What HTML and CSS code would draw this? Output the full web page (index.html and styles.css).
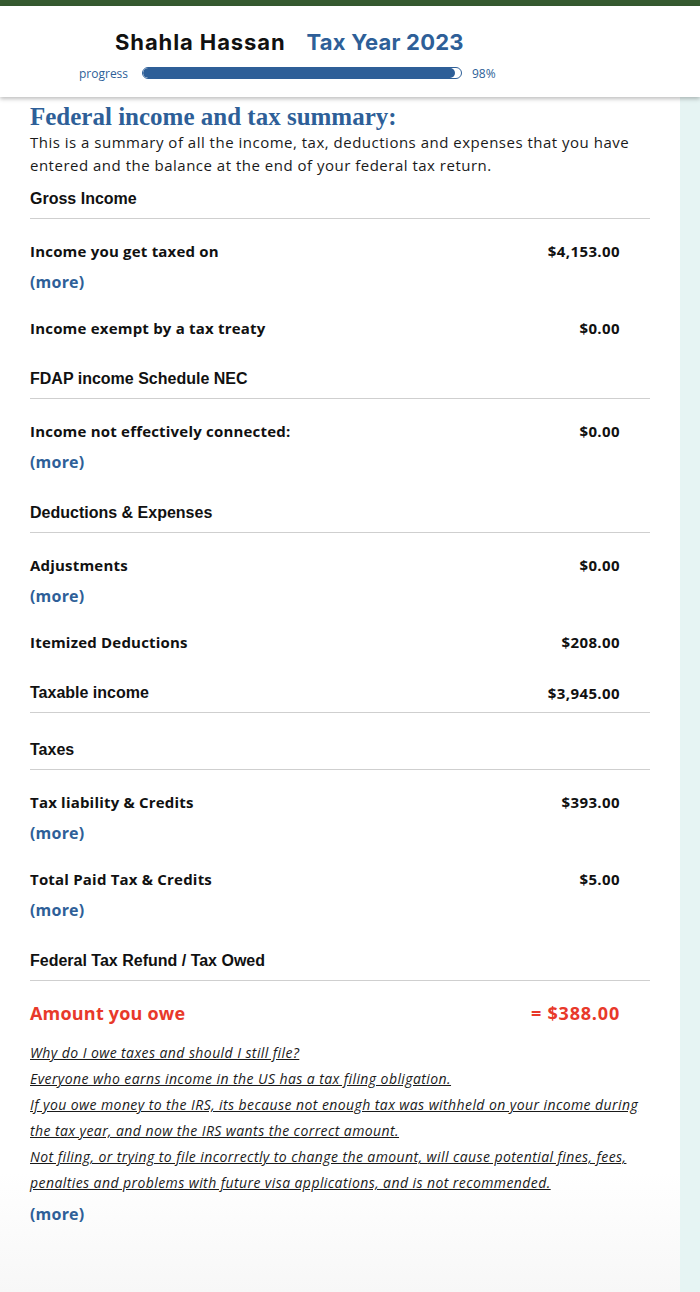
FILE: index.html
```html
<!DOCTYPE html>
<html lang="en">
<head>
<meta charset="utf-8">
<title>Federal income and tax summary</title>
<link rel="stylesheet" href="styles.css">
</head>
<body>
<div class="topbar"></div>
<header class="header">
  <div class="titles">
    <span class="name">Shahla Hassan</span>
    <span class="year">Tax Year 2023</span>
  </div>
  <div class="progress">
    <span class="plabel">progress</span>
    <span class="track"><span class="fill" style="width: 98%"></span></span>
    <span class="pct">98%</span>
  </div>
</header>
<div class="page">
  <main class="main">
    <h1 class="title">Federal income and tax summary:</h1>
    <p class="desc">This is a summary of all the income, tax, deductions and expenses that you have entered and the balance at the end of your federal tax return.</p>

    <div class="section">Gross Income</div>
    <div class="entry">
      <div class="row"><span>Income you get taxed on</span><span>$4,153.00</span></div>
      <a class="more">(more)</a>
    </div>
    <div class="entry">
      <div class="row"><span>Income exempt by a tax treaty</span><span>$0.00</span></div>
    </div>

    <div class="section">FDAP income Schedule NEC</div>
    <div class="entry">
      <div class="row"><span>Income not effectively connected:</span><span>$0.00</span></div>
      <a class="more">(more)</a>
    </div>

    <div class="section">Deductions &amp; Expenses</div>
    <div class="entry">
      <div class="row"><span>Adjustments</span><span>$0.00</span></div>
      <a class="more">(more)</a>
    </div>
    <div class="entry">
      <div class="row"><span>Itemized Deductions</span><span>$208.00</span></div>
    </div>
    <div class="section with-value"><span>Taxable income</span><span class="val">$3,945.00</span></div>

    <div class="section">Taxes</div>
    <div class="entry">
      <div class="row"><span>Tax liability &amp; Credits</span><span>$393.00</span></div>
      <a class="more">(more)</a>
    </div>
    <div class="entry">
      <div class="row"><span>Total Paid Tax &amp; Credits</span><span>$5.00</span></div>
      <a class="more">(more)</a>
    </div>

    <div class="section">Federal Tax Refund / Tax Owed</div>
    <div class="entry">
      <div class="row owe"><span>Amount you owe</span><span>= $388.00</span></div>
    </div>
    <div class="notes">
      <p>Why do I owe taxes and should I still file?</p>
      <p>Everyone who earns income in the US has a tax filing obligation.</p>
      <p>If you owe money to the IRS, its because not enough tax was withheld on your income during the tax year, and now the IRS wants the correct amount.</p>
      <p>Not filing, or trying to file incorrectly to change the amount, will cause potential fines, fees, penalties and problems with future visa applications, and is not recommended.</p>
    </div>
    <a class="more last">(more)</a>
  </main>
  <aside class="side"></aside>
</div>
</body>
</html>
```
FILE: styles.css
```css
html, body {
  margin: 0;
  padding: 0;
}
body {
  width: 700px;
  height: 1292px;
  overflow: hidden;
  background: #ffffff;
  font-family: "Open Sans", "DejaVu Sans", sans-serif;
  color: #1a1a1a;
  display: flex;
  flex-direction: column;
}
.topbar {
  height: 6px;
  background: #365a30;
}
.header {
  position: relative;
  z-index: 2;
  height: 91px;
  background: #fff;
  box-shadow: 0 2px 4px rgba(0, 0, 0, 0.25);
  display: flex;
  flex-direction: column;
  align-items: flex-start;
}
.titles {
  margin: 25px 0 0 115px;
  height: 22px;
  line-height: 22px;
  display: flex;
  gap: 21px;
  font-family: "Inter", "Open Sans", sans-serif;
  font-weight: 700;
  font-size: 22px;
}
.name { color: #111; letter-spacing: 0.9px; }
.year { color: #2e5f98; letter-spacing: 0.2px; }
.progress {
  margin: 13px 0 0 79px;
  display: flex;
  align-items: center;
  height: 14px;
  font-family: "Open Sans", sans-serif;
  font-size: 12px;
  color: #2e5f98;
}
.plabel { width: 63px; }
.track {
  width: 318px;
  height: 10px;
  border: 1.5px solid #2e5f98;
  border-radius: 7px;
  overflow: hidden;
  display: flex;
}
.fill {
  background: #2e5f98;
  border-radius: 7px;
  height: 100%;
}
.pct { margin-left: 10px; }
.page {
  flex: 1;
  display: flex;
}
.main {
  width: 620px;
  padding: 0 30px;
  background: linear-gradient(to bottom, #ffffff 0%, #ffffff 90%, #f7f7f7 100%);
}
.side {
  flex: 1;
  background: #e6f4f3;
}
.title {
  margin: 6px 0 0;
  font-family: "Liberation Serif", "DejaVu Serif", serif;
  font-weight: 700;
  font-size: 25px;
  line-height: 28px;
  color: #2e5f98;
}
.desc {
  margin: 0;
  font-size: 15px;
  line-height: 23px;
  letter-spacing: 0.5px;
  color: #1a1a1a;
}
.section {
  margin-top: 12px;
  height: 20px;
  line-height: 20px;
  padding-bottom: 9px;
  border-bottom: 1px solid #cfcfcf;
  font-family: "Liberation Sans", Arial, sans-serif;
  font-weight: 700;
  font-size: 16px;
  color: #111;
  display: flex;
  justify-content: space-between;
}
.entry + .section,
.section + .section {
  margin-top: 27px;
}
.section .val,
.row span:last-child {
  margin-right: 30px;
}
.section .val {
  font-family: "Open Sans", sans-serif;
  font-size: 15px;
  letter-spacing: 0.4px;
}
.entry {
  padding: 22px 0 4px;
}
.row {
  display: flex;
  justify-content: space-between;
  height: 20px;
  line-height: 20px;
  font-weight: 700;
  font-size: 15px;
  letter-spacing: 0.2px;
  color: #111;
}
.row span:last-child {
  letter-spacing: 0.4px;
}
.more {
  display: block;
  margin-top: 11px;
  height: 20px;
  line-height: 20px;
  font-weight: 700;
  font-size: 16px;
  letter-spacing: 0.2px;
  color: #2e5f98;
}
.row.owe {
  font-size: 18px;
  color: #e8392a;
}
.row.owe span:last-child {
  letter-spacing: 0.8px;
}
.notes {
  margin-top: 13px;
  font-size: 14px;
  line-height: 26px;
  letter-spacing: 0.42px;
  font-style: italic;
  text-decoration: underline;
  color: #1a1a1a;
}
.notes p {
  margin: 0;
}
.more.last {
  margin-top: 8px;
}
```
